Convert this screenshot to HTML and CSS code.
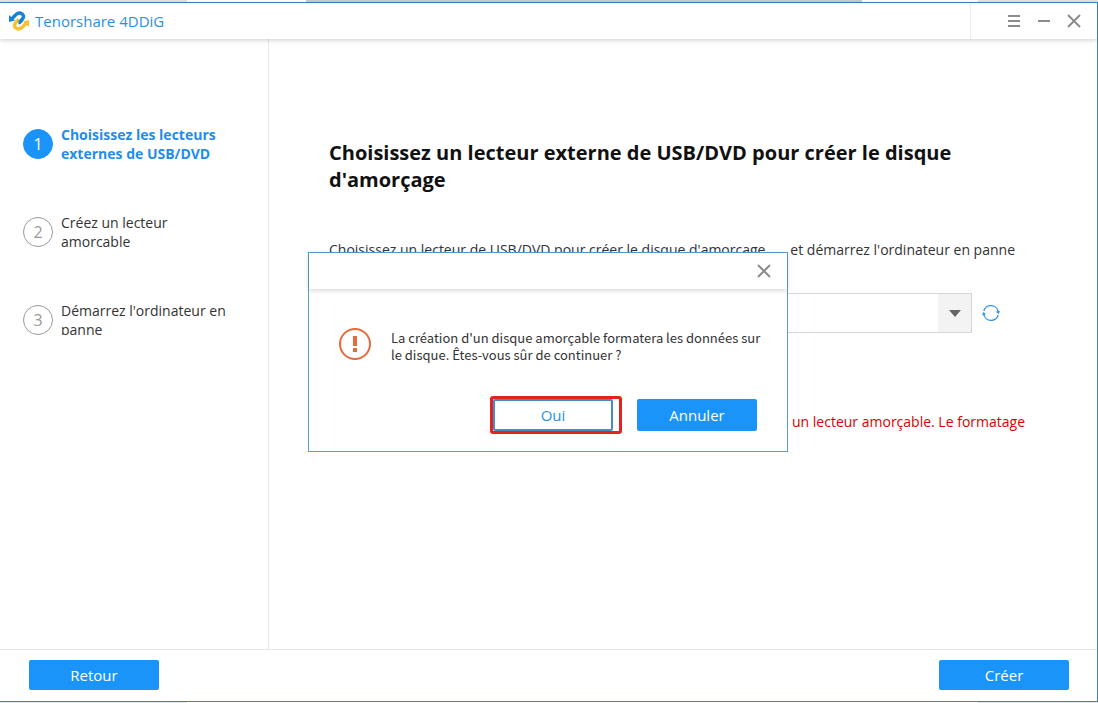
FILE: index.html
```html
<!doctype html>
<html lang="fr">
<head>
<meta charset="utf-8">
<meta name="viewport" content="width=device-width,initial-scale=1.0" />
<title>Tenorshare 4DDiG</title>
<link rel="stylesheet" href="styles.css">
</head>
<body>
  <div class="window">
    <header class="titlebar">
      <svg class="logo" width="20" height="20" viewBox="0 0 20 20" fill="none">
        <path d="M2.200 8.500 L6.500 4 Q10 .8 13 2.800 Q15.800 5.200 13.200 8.500 L9.500 12.500" stroke="#1583d6" stroke-width="3.400"/>
        <path d="M0 4 V11 L6 9.500 Z" fill="#1583d6"/>
        <path d="M17.800 11.500 L13.500 16 Q10 19.200 7 17.200 Q4.200 14.800 6.800 11.500 L10 8.200" stroke="#fbc02d" stroke-width="3.400"/>
        <path d="M20 16 V9 L14 10.500 Z" fill="#fbc02d"/>
        <path d="M13.200 8.500 L10.500 11.500" stroke="#1583d6" stroke-width="3.400"/>
      </svg>
      <span class="app-name">Tenorshare 4DDiG</span>
      <div class="controls">
        <button class="icon-btn" aria-label="Menu">
          <svg width="14" height="14" viewBox="0 0 14 14" stroke="#8c8c8c" stroke-width="2"><path d="M1 2h12M1 7h12M1 12h12"/></svg>
        </button>
        <button class="icon-btn" aria-label="Réduire">
          <svg width="14" height="14" viewBox="0 0 14 14" stroke="#8c8c8c" stroke-width="2"><path d="M1 7h12"/></svg>
        </button>
        <button class="icon-btn" aria-label="Fermer">
          <svg width="14" height="14" viewBox="0 0 14 14" stroke="#8c8c8c" stroke-width="2"><path d="M1 1l12 12M13 1L1 13"/></svg>
        </button>
      </div>
    </header>

    <div class="content">
      <nav class="sidebar">
        <ol class="steps">
          <li class="step active"><span class="num">1</span><span class="label">Choisissez les lecteurs externes de USB/DVD</span></li>
          <li class="step"><span class="num">2</span><span class="label">Créez un lecteur amorcable</span></li>
          <li class="step"><span class="num">3</span><span class="label">Démarrez l'ordinateur en panne</span></li>
        </ol>
      </nav>

      <main class="main">
        <h1>Choisissez un lecteur externe de USB/DVD pour créer le disque d'amorçage</h1>
        <label class="intro" for="drive">Choisissez un lecteur de USB/DVD pour créer le disque d'amorçage，&nbsp;&nbsp; et démarrez l'ordinateur en panne</label>
        <div class="drive-row">
          <div class="select-wrap">
            <select id="drive"><option></option></select>
            <span class="arrow"></span>
          </div>
          <button class="icon-btn refresh" aria-label="Actualiser">
            <svg width="18" height="18" viewBox="0 0 18 18" fill="none" stroke="#2b8fe6" stroke-width="1.300">
              <path d="M1.800 7 A7.400 7.400 0 0 1 16.300 8.500M16.200 11 A7.400 7.400 0 0 1 1.700 9.500"/>
              <path d="M14.600 7.500 L16.400 9 L17.300 7M3.400 10.500 L1.600 9 L.7 11"/>
            </svg>
          </button>
        </div>
        <p class="warning">un lecteur amorçable. Le formatage</p>
      </main>
    </div>

    <footer class="footer">
      <button class="btn">Retour</button>
      <button class="btn">Créer</button>
    </footer>
  </div>

  <div class="overlay">
    <div class="dialog" role="alertdialog" aria-describedby="message">
      <div class="dialog-head">
        <button class="icon-btn" aria-label="Fermer">
          <svg width="14" height="14" viewBox="0 0 14 14" stroke="#8c8c8c" stroke-width="2"><path d="M1 1l12 12M13 1L1 13"/></svg>
        </button>
      </div>
      <div class="dialog-body">
        <svg width="32" height="32" viewBox="0 0 32 32">
          <circle cx="16" cy="16" r="15" fill="none" stroke="#e9683c" stroke-width="2"/>
          <path d="M14 8h4v10h-4zM14 20h4v4h-4z" fill="#e9683c"/>
        </svg>
        <p id="message">La création d'un disque amorçable formatera les données sur le disque. Êtes-vous sûr de continuer ?</p>
      </div>
      <div class="dialog-actions">
        <button class="btn outline">Oui</button>
        <button class="btn">Annuler</button>
      </div>
    </div>
  </div>
</body>
</html>
```
FILE: styles.css
```css
* {
  box-sizing: border-box;
}

body {
  display: flex;
  min-height: 100vh;
  margin: 0;
  padding: 2px 0 1px;
  background: linear-gradient(90deg, #e4e4e6 187px, #fff 187px, #fff 306px, #c3ced4 306px, #c3ced4 862px, #fff 862px, #fff 978px, #e4e4e6 978px) top / 100% 2px no-repeat,
    linear-gradient(90deg, #dce6f2 187px, #fff 187px, #fff 978px, #dce6f2 978px);
  font-family: "Open Sans", "Noto Sans", "Noto Sans CJK SC", sans-serif;
  font-size: 14px;
  color: #333;
}

button, select {
  font: inherit;
}

.window {
  display: flex;
  flex: 1;
  min-width: 0;
  flex-direction: column;
  background: #fff;
  border: 1px solid #3f87b8;
  border-left: 0;
}

.titlebar {
  display: flex;
  position: relative;
  height: 36px;
  padding-left: 9px;
  align-items: center;
  box-shadow: 0 1px 5px rgba(0, 0, 0, 0.2);
}

.app-name {
  flex: 1;
  margin-left: 6px;
  font-size: 15px;
  color: #2b8fe0;
}

.controls {
  display: flex;
  height: 100%;
  padding: 0 8px 0 28px;
  border-left: 1px solid #eee;
  align-items: center;
}

.icon-btn {
  display: flex;
  width: 30px;
  height: 30px;
  padding: 0;
  border: 0;
  background: none;
  align-items: center;
  justify-content: center;
}

.content {
  display: flex;
  flex: 1;
}

.sidebar {
  flex: 0 0 269px;
  padding: 86px 30px 0 23px;
  border-right: 1px solid #e6e6e6;
}

.steps {
  display: flex;
  flex-direction: column;
  gap: 54px;
  margin: 0;
  padding: 0;
  list-style: none;
  overflow: hidden;
}

.step {
  display: flex;
  height: 34px;
  gap: 8px;
}

.num {
  display: flex;
  flex: 0 0 30px;
  height: 30px;
  border: 1px solid #999;
  border-radius: 50%;
  font-size: 16px;
  color: #999;
  align-items: center;
  align-self: flex-end;
  justify-content: center;
}

.label {
  line-height: 19px;
}

.active .num {
  background: #1a94f8;
  border-color: #1a94f8;
  color: #fff;
}

.active .label {
  font-weight: bold;
  color: #1f8dea;
}

.main {
  flex: 1;
  min-width: 0;
  padding: 100px 72px 0 60px;
}

h1 {
  margin: 0 0 46px;
  font-size: 20px;
  line-height: 27px;
  color: #111;
}

.intro {
  display: block;
  line-height: 22px;
  white-space: nowrap;
}

.drive-row {
  display: flex;
  gap: 4px;
  margin-top: 32px;
  align-items: center;
}

.select-wrap {
  position: relative;
  flex: 0 1 643px;
  height: 40px;
}

.select-wrap select {
  width: 100%;
  height: 100%;
  padding: 0 40px 0 10px;
  background: #fff;
  border: 1px solid #d6d6d6;
  appearance: none;
}

.arrow {
  display: flex;
  position: absolute;
  top: 1px;
  right: 1px;
  bottom: 1px;
  width: 33px;
  background: #f3f3f3;
  align-items: center;
  justify-content: center;
  pointer-events: none;
}

.arrow::after {
  content: "";
  border: 6px solid transparent;
  border-top: 7px solid #666;
  border-bottom: 0;
}

.warning {
  margin: 78px 0 0;
  line-height: 22px;
  text-align: right;
  color: #d90000;
}

.footer {
  display: flex;
  padding: 10px 28px 11px 29px;
  border-top: 1px solid #e6e6e6;
  justify-content: space-between;
}

.btn {
  width: 130px;
  height: 30px;
  padding: 0;
  background: #1a94f8;
  border: 0;
  border-radius: 2px;
  font-size: 15px;
  color: #fff;
}

.overlay {
  display: flex;
  position: fixed;
  inset: 2px 2px 1px 0;
  align-items: center;
  justify-content: center;
}

.dialog {
  width: 480px;
  background: #fff;
  border: 1px solid #56a0cc;
}

.dialog-head {
  display: flex;
  height: 36px;
  padding-right: 8px;
  align-items: center;
  justify-content: flex-end;
  box-shadow: 0 1px 5px rgba(0, 0, 0, 0.2);
}

.dialog-body {
  display: flex;
  gap: 20px;
  padding: 39px 20px 0 30px;
}

.dialog-body svg {
  flex: none;
}

.dialog-body p {
  margin: 1px 0 0;
  font-family: "Noto Sans CJK SC", sans-serif;
  font-size: 13px;
  line-height: 17px;
}

.dialog-actions {
  display: flex;
  gap: 24px;
  margin-top: 36px;
  padding: 0 30px 20px;
  justify-content: flex-end;
}

.dialog-actions .btn {
  width: 120px;
  height: 32px;
}

.dialog-actions .outline {
  position: relative;
  background: #fff;
  border: 2px solid #3f8fd0;
  color: #2b8fe0;
}

/* red marker around the button to click */
.outline::after {
  content: "";
  position: absolute;
  inset: -5px -11px -5px -5px;
  border: 3px solid #e2231f;
  border-radius: 3px;
}
```
